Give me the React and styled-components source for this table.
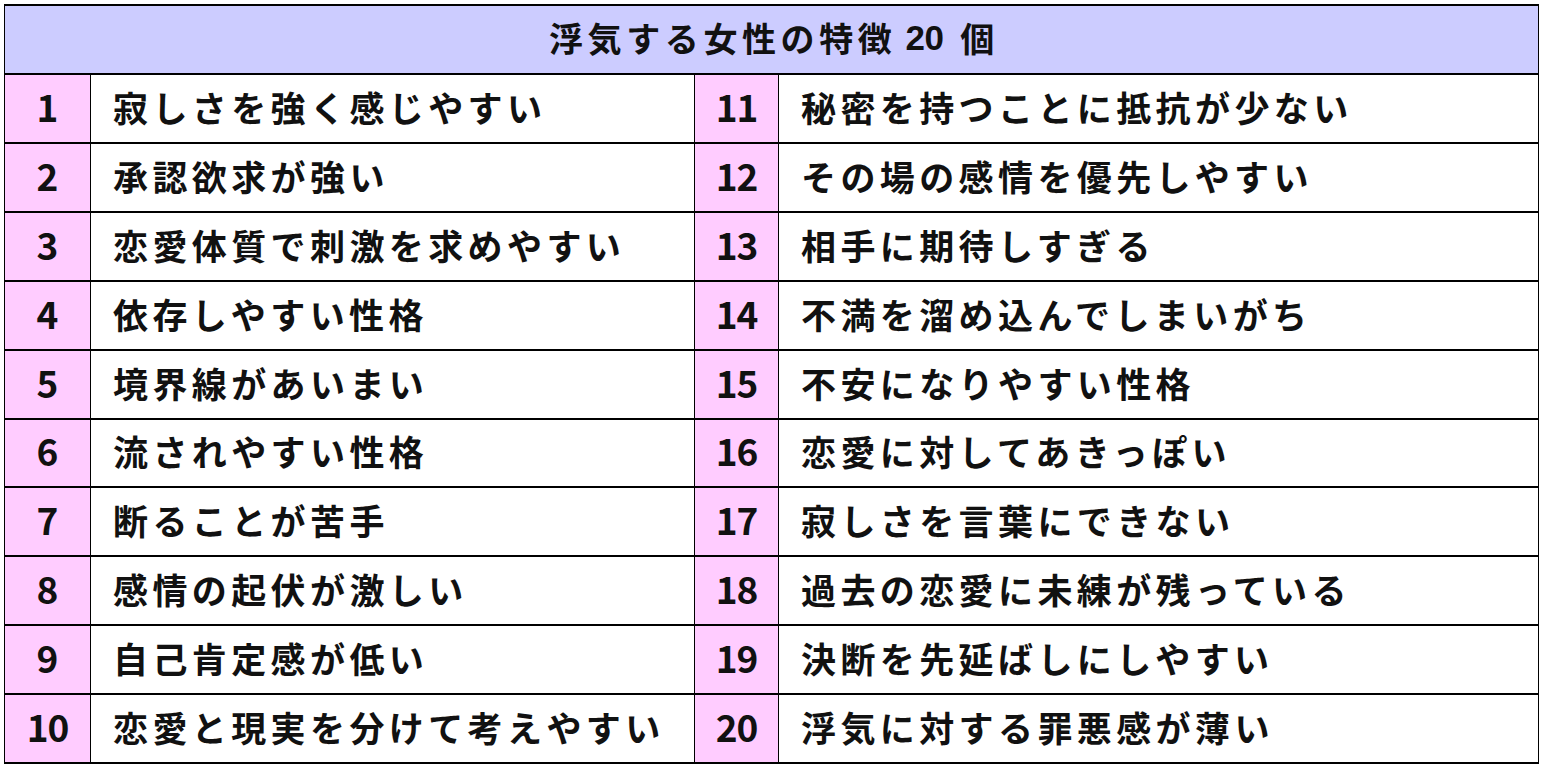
import React from "react";
import styled, { createGlobalStyle } from "styled-components";

const GlobalStyle = createGlobalStyle`
  html, body { margin: 0; padding: 0; background: #ffffff; }
  body { font-family: "Noto Sans CJK JP", "Noto Sans", sans-serif; }
`;

const Page = styled.div`
  padding: 4px;
`;

const Table = styled.div`
  display: grid;
  grid-template-columns: 85px 604px 84px 1fr;
  grid-template-rows: 67px repeat(10, 1fr);
  width: 1535px;
  height: 760px;
  box-sizing: border-box;
  border-top: 2px solid #000;
  border-left: 1px solid #000;
  border-right: 1px solid #000;
  border-bottom: 2px solid #000;
  color: #111;
`;

const Header = styled.div`
  grid-column: 1 / -1;
  background: #ccccff;
  display: flex;
  align-items: center;
  justify-content: center;
  font-weight: 700;
  font-size: 34px;
  line-height: 1;
  letter-spacing: 4.6px;
  padding: 0 0 4px 5px;
`;

const Latin = styled.span`
  font-family: "Liberation Sans", Arial, sans-serif;
  font-size: 35px;
  letter-spacing: -0.5px;
  margin: 0 17px 0 9px;
`;

const NumCell = styled.div`
  background: #ffccff;
  border-top: 2px solid #000;
  border-left: ${(p) => (p.$first ? "0" : "1px solid #000")};
  display: flex;
  align-items: center;
  justify-content: center;
  font-weight: 700;
  font-size: 37px;
  line-height: 1;
  padding-bottom: 4px;
  letter-spacing: ${(p) => (p.$two ? "-1px" : "0")};
`;

const TextCell = styled.div`
  border-top: 2px solid #000;
  border-left: 1px solid #000;
  display: flex;
  align-items: center;
  padding: 0 0 4px 22px;
  font-weight: 700;
  font-size: 35px;
  line-height: 1;
  letter-spacing: 4.4px;
  white-space: nowrap;
  overflow: hidden;
`;

const left = [
  "寂しさを強く感じやすい",
  "承認欲求が強い",
  "恋愛体質で刺激を求めやすい",
  "依存しやすい性格",
  "境界線があいまい",
  "流されやすい性格",
  "断ることが苦手",
  "感情の起伏が激しい",
  "自己肯定感が低い",
  "恋愛と現実を分けて考えやすい",
];

const right = [
  "秘密を持つことに抵抗が少ない",
  "その場の感情を優先しやすい",
  "相手に期待しすぎる",
  "不満を溜め込んでしまいがち",
  "不安になりやすい性格",
  "恋愛に対してあきっぽい",
  "寂しさを言葉にできない",
  "過去の恋愛に未練が残っている",
  "決断を先延ばしにしやすい",
  "浮気に対する罪悪感が薄い",
];

export default function App() {
  return (
    <>
      <GlobalStyle />
      <Page>
        <Table>
          <Header>
            浮気する女性の特徴<Latin>20</Latin>個
          </Header>
          {left.map((t, i) => (
            <React.Fragment key={i}>
              <NumCell $first $two={i + 1 >= 10}>{i + 1}</NumCell>
              <TextCell>{t}</TextCell>
              <NumCell $two>{i + 11}</NumCell>
              <TextCell>{right[i]}</TextCell>
            </React.Fragment>
          ))}
        </Table>
      </Page>
    </>
  );
}
